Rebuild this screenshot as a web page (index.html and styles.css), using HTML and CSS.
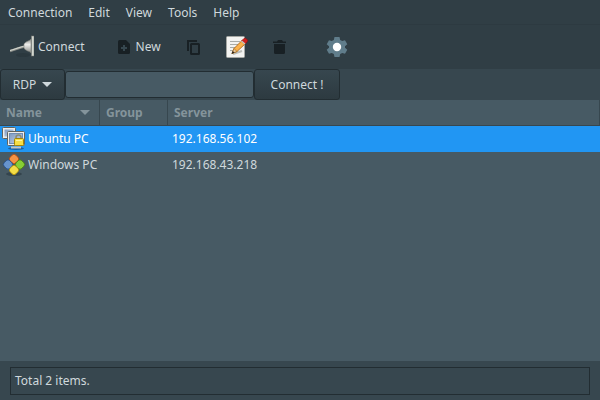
FILE: index.html
```html
<!DOCTYPE html>
<html lang="en">
<head>
    <meta charset="UTF-8">
    <meta name="viewport" content="width=device-width, initial-scale=1.0">
    <title>Remote Desktop Connections</title>
    <link rel="stylesheet" href="styles.css">
</head>
<body>
    <nav class="menubar">
        <button type="button">Connection</button>
        <button type="button">Edit</button>
        <button type="button">View</button>
        <button type="button">Tools</button>
        <button type="button">Help</button>
    </nav>

    <div class="toolbar">
        <button type="button" class="tool connect">
            <svg width="24" height="24" viewBox="0 0 24 24">
                <defs>
                    <linearGradient id="plug" x1="0" y1="0" x2="0" y2="1">
                        <stop offset="0" stop-color="#8d8f8a"/>
                        <stop offset="0.4" stop-color="#eeeeec"/>
                        <stop offset="1" stop-color="#888a85"/>
                    </linearGradient>
                </defs>
                <ellipse cx="13" cy="20" rx="7" ry="2" fill="#263238" opacity="0.5"/>
                <path d="M0 16 C5 15 9 12.500 15 11.500" fill="none" stroke="#8d8f8a" stroke-width="2.400"/>
                <path d="M0 15.500 C5 14.500 9 12 15 11" fill="none" stroke="#d3d7cf" stroke-width="1.200"/>
                <path d="M21 4 C20 6 15 6.500 14 9 V13 C15 16 20 16 21 18 Z" fill="url(#plug)" stroke="#7d7f7b" stroke-width="0.600"/>
                <rect x="21.500" y="1" width="2.500" height="20" fill="#d3d7cf" stroke="#777975" stroke-width="0.500"/>
            </svg>
            Connect
        </button>
        <button type="button" class="tool new" disabled>
            <svg width="24" height="24" viewBox="0 0 24 24">
                <path d="M7.500 5 H14 L18 9 V17.500 Q18 19 16.500 19 H7.500 Q6 19 6 17.500 V6.500 Q6 5 7.500 5 Z" fill="#182024"/>
                <path d="M12 10 V16 M9 13 H15" stroke="#36474f" stroke-width="2"/>
            </svg>
            New
        </button>
        <button type="button" class="tool icon-only" aria-label="Copy" disabled>
            <svg width="24" height="24" viewBox="0 0 24 24" fill="none" stroke="#182024" stroke-width="2">
                <path d="M6 16 V6 H15"/>
                <rect x="9" y="9" width="8" height="10" rx="0.500"/>
            </svg>
        </button>
        <button type="button" class="tool icon-only" aria-label="Edit">
            <svg width="24" height="24" viewBox="0 0 24 24">
                <rect x="1.500" y="1.500" width="18" height="21" rx="1" fill="#f3f3f1" stroke="#a5a7a3"/>
                <path d="M5 6.500 H15 M5 9.500 H13 M5 12.500 H11 M5 15.500 H9" stroke="#aaaca8"/>
                <path d="M8 19 L17 16" stroke="#bbbdb9" stroke-width="2"/>
                <path d="M7 18.500 L9 13.500 L17.500 5 L21 8 L12 16.500 Z" fill="#fbb24b" stroke="#a75b09" stroke-width="0.800"/>
                <path d="M7 18.500 L9 13.500 L12 16.500 Z" fill="#e8c496" stroke="#8f5902" stroke-width="0.500"/>
                <path d="M6.500 19 L7.700 16 L9.500 17.600 Z" fill="#222222"/>
                <path d="M16.500 6 L19 3.500 Q20 2.500 21.500 4 L22.500 5 Q23 6 22 7 L20 9 Z" fill="#cc1f1f" stroke="#8d1010" stroke-width="0.600"/>
                <path d="M16.500 6 L20 9" stroke="#c5c7c3" stroke-width="1.200"/>
            </svg>
        </button>
        <button type="button" class="tool icon-only" aria-label="Delete" disabled>
            <svg width="24" height="24" viewBox="0 0 24 24" fill="#182024">
                <path d="M5 6.500 H9 L10 5 H14 L15 6.500 H18 V8 H5 Z"/>
                <path d="M6 9 H17 V17.500 Q17 19 15.500 19 H7.500 Q6 19 6 17.500 Z"/>
            </svg>
        </button>
        <button type="button" class="tool icon-only settings" aria-label="Preferences">
            <svg width="24" height="24" viewBox="0 0 24 24">
                <path d="M9.500 2 H14.500 L15.200 5 L17.200 6.100 L20 5.200 L22.300 9.300 L20 11.300 V12.700 L22.300 14.700 L20 18.800 L17.200 17.900 L15.200 19 L14.500 22 H9.500 L8.800 19 L6.800 17.900 L4 18.800 L1.700 14.700 L4 12.700 V11.300 L1.700 9.300 L4 5.200 L6.800 6.100 L8.800 5 Z" fill="#607d8b"/>
                <circle cx="12" cy="12" r="4.200" fill="#ffffff"/>
            </svg>
        </button>
    </div>

    <form class="quick-connect">
        <button type="button" class="btn protocol">RDP <span class="arrow"></span></button>
        <input type="text" aria-label="Server address">
        <button type="button" class="btn go">Connect !</button>
    </form>

    <main class="list">
        <table>
            <colgroup>
                <col class="col-name">
                <col class="col-group">
                <col>
            </colgroup>
            <thead>
                <tr>
                    <th><div class="sort">Name <span class="arrow"></span></div></th>
                    <th>Group</th>
                    <th>Server</th>
                </tr>
            </thead>
            <tbody>
                <tr class="selected">
                    <td>
                        <div class="name">
                            <svg width="24" height="24" viewBox="0 0 24 24">
                                <defs>
                                    <linearGradient id="screen" x1="0" y1="0" x2="1" y2="1">
                                        <stop offset="0" stop-color="#7f9bc2"/>
                                        <stop offset="1" stop-color="#c4d3e7"/>
                                    </linearGradient>
                                </defs>
                                <ellipse cx="14" cy="21.500" rx="8" ry="1.500" fill="#1b5f9e"/>
                                <rect x="0.500" y="0.500" width="13" height="11" rx="1" fill="#eeeeec" stroke="#62645f"/>
                                <rect x="2.500" y="2.500" width="9" height="7" fill="url(#screen)"/>
                                <rect x="5.500" y="4.500" width="17" height="14" rx="1" fill="#eeeeec" stroke="#62645f"/>
                                <rect x="7.500" y="6.500" width="13" height="10" fill="url(#screen)" stroke="#728db1"/>
                                <path d="M9 20.500 H19" stroke="#c5c7c3" stroke-width="2"/>
                                <path d="M14 12 V10.500 Q14 8 16.500 8 Q19 8 19 10.500 V12" fill="none" stroke="#8b8c75" stroke-width="1.600"/>
                                <rect x="12.500" y="11.500" width="9" height="7" rx="1" fill="#f6df45" stroke="#a38406"/>
                                <path d="M14 13.500 H20" stroke="#fff69d"/>
                            </svg>
                            Ubuntu PC
                        </div>
                    </td>
                    <td></td>
                    <td>192.168.56.102</td>
                </tr>
                <tr>
                    <td>
                        <div class="name">
                            <svg width="24" height="24" viewBox="0 0 24 24" stroke-width="0.800">
                                <ellipse cx="12" cy="21" rx="8" ry="2" fill="#35454e"/>
                                <rect x="8" y="2" width="8" height="8" rx="2.500" transform="rotate(45 12 6)" fill="#f59345" stroke="#bd4c0c"/>
                                <rect x="2" y="7.500" width="8" height="8" rx="2.500" transform="rotate(45 6 11.500)" fill="#6794cc" stroke="#204a87"/>
                                <rect x="14" y="7.500" width="8" height="8" rx="2.500" transform="rotate(45 18 11.500)" fill="#87ce35" stroke="#437d09"/>
                                <rect x="8" y="13" width="8" height="8" rx="2.500" transform="rotate(45 12 17)" fill="#f4dd46" stroke="#b49208"/>
                            </svg>
                            Windows PC
                        </div>
                    </td>
                    <td></td>
                    <td>192.168.43.218</td>
                </tr>
            </tbody>
        </table>
    </main>

    <footer class="statusbar">
        <div class="status">Total 2 items.</div>
    </footer>
</body>
</html>
```
FILE: styles.css
```css
:root {
    --bar: #303e45;
    --panel: #37474f;
    --base: #475a64;
    --line: #222d32;
    --text: #cfd8dc;
    --muted: #84949b;
    --selected: #2196f3;
}

* {
    box-sizing: border-box;
    margin: 0;
    padding: 0;
}

body {
    display: flex;
    flex-direction: column;
    min-height: 100vh;
    background: var(--panel);
    color: var(--text);
    font-family: "Noto Sans", sans-serif;
    font-size: 12px;
    line-height: 16px;
}

button, input {
    font: inherit;
    color: inherit;
}

svg {
    display: block;
    flex: none;
}

.menubar {
    display: flex;
    height: 25px;
    padding-top: 2px;
    background: var(--bar);
    border-bottom: 1px solid #2d3a41;
}

.menubar button {
    padding: 0 8px;
    border: none;
    background: none;
}

.toolbar {
    display: flex;
    height: 44px;
    padding-bottom: 1px;
    background: var(--bar);
}

.tool {
    display: flex;
    align-items: center;
    border: none;
    background: none;
}

.tool:disabled {
    color: var(--text);
}

.connect {
    gap: 4px;
    padding: 0 10px;
}

.new {
    margin-left: 17px;
    padding-right: 12px;
}

.icon-only {
    justify-content: center;
    width: 43px;
}

.settings {
    margin-left: 14px;
}

.arrow {
    border: 5px solid transparent;
    border-top-color: currentColor;
    border-bottom: none;
}

.quick-connect {
    display: flex;
    align-items: center;
    height: 31px;
}

.btn {
    height: 31px;
    border: 1px solid var(--line);
    border-radius: 3px;
    background: linear-gradient(#37474f, #2d3a40);
}

.protocol {
    display: flex;
    align-items: center;
    justify-content: center;
    gap: 6px;
    width: 65px;
}

.quick-connect input {
    width: 189px;
    height: 27px;
    padding: 0 6px;
    border: 1px solid var(--line);
    border-radius: 3px;
    background: var(--base);
    outline: none;
}

.go {
    width: 86px;
}

.list {
    flex: 1;
    background: var(--base);
}

table {
    width: 100%;
    table-layout: fixed;
    border-collapse: separate;
    border-spacing: 0;
}

.col-name {
    width: 100px;
}

.col-group {
    width: 68px;
}

th {
    height: 26px;
    padding: 0 6px;
    border-right: 1px solid var(--panel);
    border-bottom: 1px solid var(--panel);
    color: var(--muted);
    text-align: left;
}

.sort {
    display: flex;
    align-items: center;
    justify-content: space-between;
    padding-right: 3px;
}

td {
    height: 26px;
    padding: 0 4px;
}

td:first-child {
    padding: 0 2px;
}

.name {
    display: flex;
    align-items: center;
    gap: 2px;
    white-space: nowrap;
}

.selected {
    background: var(--selected);
    color: #ffffff;
}

.statusbar {
    padding: 6px 10px 5px;
}

.status {
    padding: 5px 4px;
    border: 1px solid var(--line);
}
```
